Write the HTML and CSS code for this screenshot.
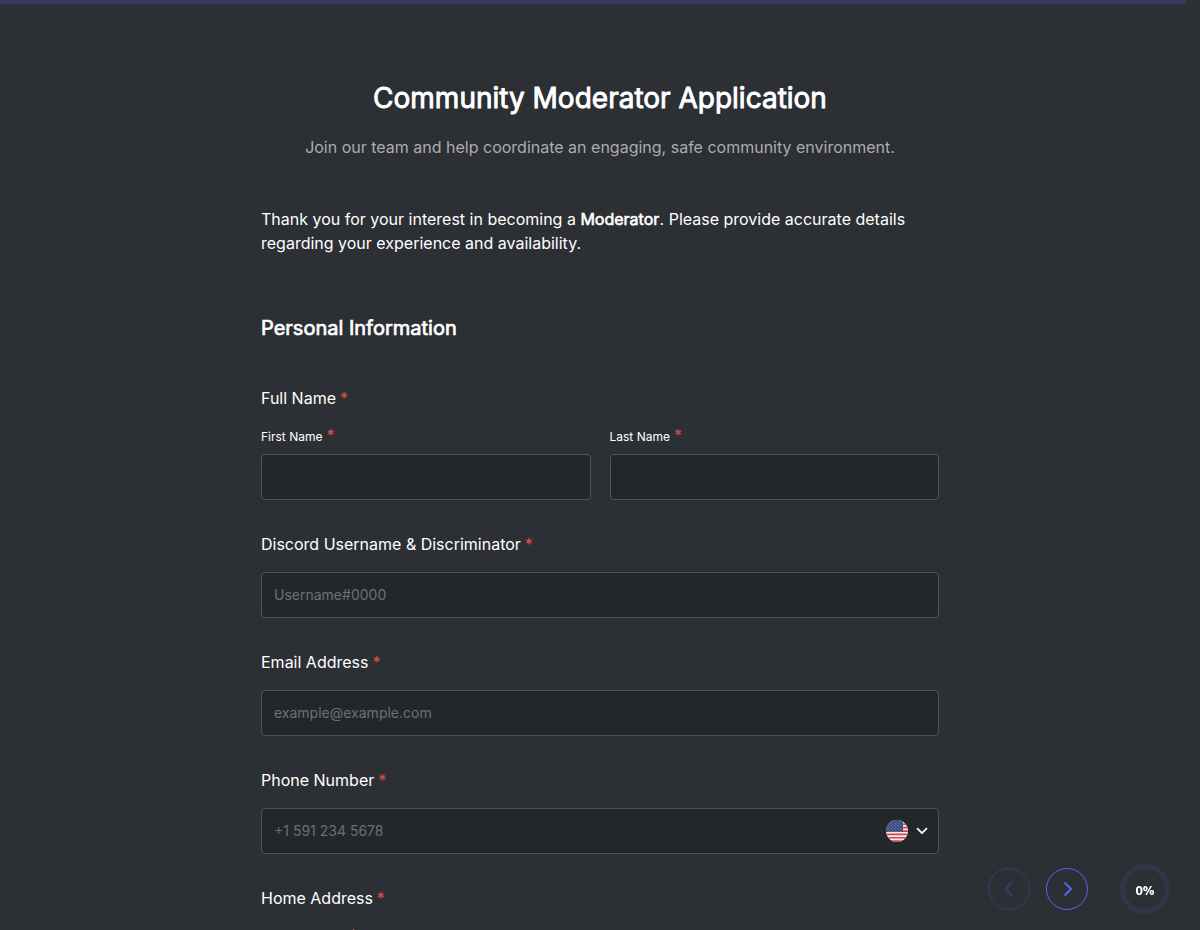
FILE: index.html
```html
<!DOCTYPE html>
<html lang="en">
<head>
<meta charset="utf-8">
<title>Community Moderator Application</title>
<link rel="stylesheet" href="styles.css">
</head>
<body>
<div class="page-progress"></div>
<main class="form">
  <header class="form-header">
    <h1 class="title">Community Moderator Application</h1>
    <p class="subtitle">Join our team and help coordinate an engaging, safe community environment.</p>
  </header>
  <p class="intro">Thank you for your interest in becoming a <strong class="strong">Moderator</strong>. Please provide accurate details regarding your experience and availability.</p>
  <h2 class="section-title">Personal Information</h2>

  <div class="field">
    <div class="label">Full Name <span class="req">*</span></div>
    <div class="name-row">
      <div class="subfield">
        <label class="sublabel" for="first">First Name <span class="req">*</span></label>
        <input class="input" id="first" type="text">
      </div>
      <div class="subfield">
        <label class="sublabel" for="last">Last Name <span class="req">*</span></label>
        <input class="input" id="last" type="text">
      </div>
    </div>
  </div>

  <div class="field">
    <label class="label" for="discord">Discord Username &amp; Discriminator <span class="req">*</span></label>
    <input class="input" id="discord" type="text" placeholder="Username#0000">
  </div>

  <div class="field">
    <label class="label" for="email">Email Address <span class="req">*</span></label>
    <input class="input" id="email" type="email" placeholder="example@example.com">
  </div>

  <div class="field">
    <label class="label" for="phone">Phone Number <span class="req">*</span></label>
    <div class="input phone">
      <input class="phone-input" id="phone" type="tel" placeholder="+1 591 234 5678">
      <svg class="flag" viewBox="0 0 22 22">
        <defs>
          <clipPath id="disc"><circle cx="11" cy="11" r="11"/></clipPath>
          <pattern id="stars" width="3" height="3" patternUnits="userSpaceOnUse">
            <rect width="3" height="3" fill="#2f4678"/>
            <rect x="0.3" y="0.4" width="1" height="1" fill="#8d9aba"/>
            <rect x="1.8" y="1.9" width="1" height="1" fill="#8d9aba"/>
          </pattern>
        </defs>
        <g clip-path="url(#disc)">
          <rect width="22" height="22" fill="#f3eeee"/>
          <path fill="#d64550" d="M0 0h22v1.7H0zM0 3.4h22v1.7H0zM0 6.8h22v1.7H0zM0 10.2h22v1.7H0zM0 13.5h22v1.7H0zM0 16.9h22v1.7H0zM0 20.3h22V22H0z"/>
          <rect width="17" height="11.8" fill="url(#stars)"/>
        </g>
      </svg>
      <svg class="caret" viewBox="0 0 12 8"><path d="M1.500 1.600 6 6.100l4.500-4.500"/></svg>
    </div>
  </div>

  <div class="field">
    <div class="label">Home Address <span class="req">*</span></div>
    <div class="subfield">
      <label class="sublabel" for="street">Street Address <span class="req">*</span></label>
    </div>
  </div>
</main>

<nav class="pager">
  <button class="page-btn prev" type="button" aria-label="Previous"><svg class="arrow" viewBox="0 0 10 16"><path d="M7.500 2 1.500 8l6 6"/></svg></button>
  <button class="page-btn" type="button" aria-label="Next"><svg class="arrow" viewBox="0 0 10 16"><path d="M3 2l6 6-6 6"/></svg></button>
  <div class="percent">0%</div>
</nav>
</body>
</html>
```
FILE: styles.css
```css
* { box-sizing: border-box; }

body {
  margin: 0;
  height: 930px;
  overflow: hidden;
  background: #2c2f33;
  color: #fff;
  font-family: Inter, "Liberation Sans", sans-serif;
  font-size: 16px;
  line-height: 24px;
}

.page-progress {
  width: 1186px;
  height: 4px;
  background: #353a5d;
}

.form {
  width: 678px;
  margin: 0 auto;
}

.form-header {
  padding-top: 76px;
  text-align: center;
}

.title {
  margin: 0;
  font-size: 28px;
  line-height: 36px;
  font-weight: 400;
  -webkit-text-stroke: 0.9px #fff;
}

.subtitle {
  margin: 19px 0 0;
  color: #abacae;
}

.intro { margin: 48px 0 0; }

.strong {
  margin-right: 0.3px;
  font-weight: 400;
  -webkit-text-stroke: 0.6px #fff;
}

.section-title {
  margin: 59px 0 0;
  font-size: 20px;
  line-height: 28px;
  font-weight: 400;
  -webkit-text-stroke: 0.7px #fff;
}

.section-title + .field { margin-top: 44px; }

.field { margin-top: 32px; }

.label {
  display: block;
  margin-bottom: 16px;
}

.req {
  margin-left: -0.6px;
  color: #e0504f;
}

.name-row {
  display: grid;
  grid-template-columns: 1fr 1fr;
  gap: 19px;
}

.sublabel {
  display: flex;
  gap: 4px;
  height: 28px;
  font-size: 12px;
  line-height: 21px;
}

.sublabel .req {
  margin-left: 0;
  font-size: 16px;
  line-height: 19px;
}

.input {
  display: block;
  width: 100%;
  height: 46px;
  padding: 0 12px 2px;
  border: 1px solid #4f545c;
  border-radius: 4px;
  background: #23272a;
  color: #fff;
  font: 14px Inter, "Liberation Sans", sans-serif;
}

.input::placeholder,
.phone-input::placeholder { color: #6d7073; opacity: 1; }

.phone {
  display: flex;
  align-items: center;
  padding: 0 10px 0 12px;
}

.phone-input {
  flex: 1;
  padding: 0 0 2px;
  border: 0;
  background: none;
  color: #fff;
  font: inherit;
}

.flag { width: 22px; height: 22px; }

.caret {
  width: 12px;
  height: 8px;
  margin-left: 8px;
}

.caret path {
  fill: none;
  stroke: #fff;
  stroke-width: 1.7;
  stroke-linecap: round;
  stroke-linejoin: round;
}

.pager {
  position: fixed;
  right: 30px;
  bottom: 16px;
  display: flex;
  align-items: center;
  gap: 16px;
}

.page-btn {
  display: flex;
  align-items: center;
  justify-content: center;
  width: 42px;
  height: 42px;
  padding: 0;
  border: 1px solid #5865f2;
  border-radius: 50%;
  background: none;
  color: #5865f2;
}

.prev { opacity: 0.3; }

.arrow { width: 10px; height: 16px; }

.arrow path {
  fill: none;
  stroke: currentColor;
  stroke-width: 1.800;
  stroke-linecap: round;
  stroke-linejoin: round;
}

.percent {
  display: flex;
  align-items: center;
  justify-content: center;
  width: 50px;
  height: 50px;
  margin-left: 16px;
  padding-top: 1px;
  border: 5px solid #323448;
  border-radius: 50%;
  font-family: "Open Sans", "Noto Sans", sans-serif;
  font-size: 13px;
  font-weight: 700;
}
```
